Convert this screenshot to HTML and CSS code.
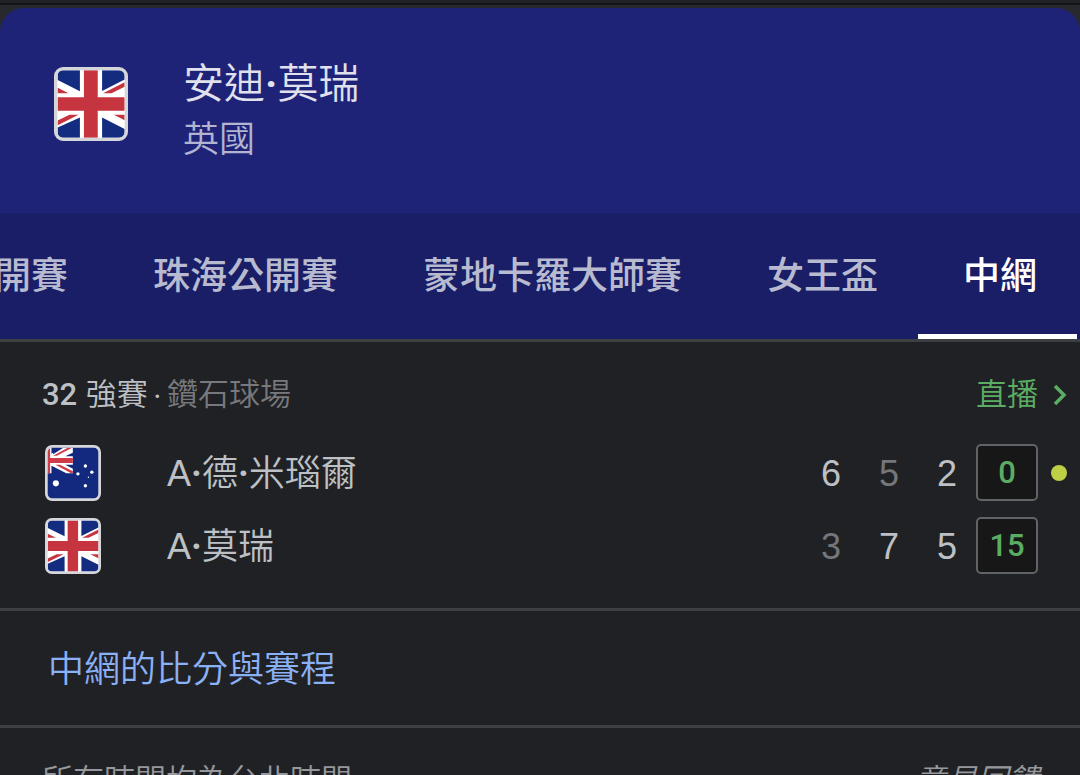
FILE: index.html
```html
<!DOCTYPE html>
<html lang="zh-Hant">
<head>
<meta charset="utf-8">
<meta name="viewport" content="width=device-width, initial-scale=1">
<title>安迪·莫瑞</title>
<link rel="stylesheet" href="styles.css">
</head>
<body>
<svg class="sprite" aria-hidden="true">
  <symbol id="flag-gb" viewBox="44 53 220 220">
    <rect x="49" y="58" width="210" height="210" rx="22" fill="#fff"/>
    <path fill="#142c80" d="M121 63H70Q55 63 55 78V92L121 125ZM187 63H238Q254 63 254 78V90L187 124ZM55 233L121 203V263H70Q55 263 55 248ZM187 203L254 237V248Q254 263 238 263H187Z"/>
    <path fill="#c5343f" d="M133 63H174V143H254V183H174V263H133V183H55V143H133ZM55 115L87 131H55ZM254 98V112L215 131H190ZM55 212L90 195H117L55 226ZM222 195H254V211Z"/>
    <rect x="49" y="58" width="210" height="210" rx="22" fill="none" stroke="#d5d6da" stroke-width="10"/>
  </symbol>
  <symbol id="flag-au" viewBox="47 29 165 165">
    <rect x="51" y="33" width="157" height="157" rx="17" fill="#12297f"/>
    <path fill="#fff" d="M54 37H66V55L93 37H129V52L107 62H129V87H107L129 99V112H110L66 90V112H54Z"/>
    <path fill="#12297f" d="M71 37H101L71 56ZM129 53V61H112ZM71 93L98 112H71ZM112 88H129V97Z"/>
    <path fill="#d03b49" d="M54 37H62V67H129V82H62V112H54ZM114 37H127L82 61H71ZM78 87H91L129 106V112H124Z"/>
    <g fill="#fff"><circle cx="79" cy="142" r="9"/><circle cx="144" cy="114" r="5"/><circle cx="166" cy="91" r="5"/><circle cx="185" cy="109" r="5"/><circle cx="166" cy="149" r="5"/><circle cx="175" cy="124" r="2"/></g>
    <rect x="51" y="33" width="157" height="157" rx="17" fill="none" stroke="#d5d6da" stroke-width="8"/>
  </symbol>
</svg>

<main class="card">
  <header class="player">
    <svg class="player-flag" role="img" aria-label="英國"><use href="#flag-gb"/></svg>
    <div>
      <h1 class="player-name">安迪<span class="dot">·</span>莫瑞</h1>
      <p class="player-country">英國</p>
    </div>
  </header>

  <nav class="tabs" aria-label="賽事">
    <a class="tab" href="#open">開賽</a>
    <a class="tab" href="#zhuhai">珠海公開賽</a>
    <a class="tab" href="#monte-carlo">蒙地卡羅大師賽</a>
    <a class="tab" href="#queens">女王盃</a>
    <a class="tab tab-active" href="#china-open" aria-current="page">中網</a>
  </nav>

  <section class="match">
    <div class="match-head">
      <p class="match-title"><span class="round-number">32</span> 強賽<span class="separator"> · </span><span class="court">鑽石球場</span></p>
      <a class="live" href="#live">直播
        <svg class="chevron" viewBox="0 0 14 22" aria-hidden="true"><path d="M2 2L11 11L2 20" fill="none" stroke="currentColor" stroke-width="3.5"/></svg>
      </a>
    </div>
    <table class="scores">
      <tr>
        <td class="col-flag"><svg class="flag" role="img" aria-label="澳洲"><use href="#flag-au"/></svg></td>
        <th class="col-name" scope="row">A<span class="dot">·</span>德<span class="dot">·</span>米瑙爾</th>
        <td class="col-set">6</td>
        <td class="col-set lost">5</td>
        <td class="col-set">2</td>
        <td class="col-game"><div class="game">0</div></td>
        <td class="col-serve"><div class="serve"></div></td>
      </tr>
      <tr>
        <td class="col-flag"><svg class="flag" role="img" aria-label="英國"><use href="#flag-gb"/></svg></td>
        <th class="col-name" scope="row">A<span class="dot">·</span>莫瑞</th>
        <td class="col-set lost">3</td>
        <td class="col-set">7</td>
        <td class="col-set">5</td>
        <td class="col-game"><div class="game">15</div></td>
        <td class="col-serve"></td>
      </tr>
    </table>
  </section>

  <a class="more" href="#schedule">中網的比分與賽程</a>

  <footer class="footer">
    <span>所有時間均為台北時間</span>
    <a class="feedback" href="#feedback">意見回饋</a>
  </footer>
</main>
</body>
</html>
```

FILE: styles.css
```css
* {
  box-sizing: border-box;
}

html {
  background: #202124;
  scrollbar-width: none;
}

body {
  margin: 0;
  border-top: 3px solid #202124;
  background: #202124;
  color: #bdc1c6;
  font-family: "Liberation Sans", "Noto Sans CJK TC", sans-serif;
  font-weight: 350;
}

h1,
p {
  margin: 0;
  font-weight: inherit;
}

a {
  color: inherit;
  text-decoration: none;
}

.sprite {
  position: absolute;
  width: 0;
  height: 0;
}

.dot {
  font-family: Roboto, sans-serif;
  font-weight: 700;
}

.separator {
  font-family: "Open Sans", sans-serif;
  font-size: 24px;
  font-weight: 600;
  line-height: 1;
}

.card {
  padding-top: 3px;
  border-top: 2px solid #141416;
  background: #27292c;
}

.player {
  display: flex;
  gap: 55px;
  padding: 48px 54px 45px;
  border-radius: 24px 24px 0 0;
  background: #1e2378;
}

.player-flag {
  flex: none;
  width: 74px;
  height: 74px;
  margin-top: 11px;
}

.player-name {
  color: #e0e1ec;
  font-size: 41px;
  line-height: 56px;
}

.player-country {
  color: #b2b4d0;
  font-size: 36px;
  line-height: 56px;
}

.tabs {
  display: flex;
  justify-content: flex-end;
  overflow: hidden;
  padding-right: 3px;
  border-bottom: 3px solid #3c4043;
  background: #191e66;
}

.tab {
  flex: none;
  padding: 35px 40px 29px 45px;
  border-bottom: 5px solid transparent;
  color: #b8bad0;
  font-size: 37px;
  font-weight: 500;
  line-height: 57px;
}

.tab-active {
  border-color: #fff;
  color: #fff;
}

.match,
.footer {
  background: #202124;
}

.match {
  padding: 31px 0 26px;
  border-bottom: 3px solid #3c4043;
}

.match-head {
  display: flex;
  justify-content: space-between;
  padding: 0 13px 19px 42px;
  font-size: 31px;
  line-height: 44px;
}

.round-number {
  font-family: Roboto, sans-serif;
  font-weight: 500;
}

.court {
  color: #77797d;
}

.live {
  display: flex;
  align-items: center;
  gap: 15px;
  color: #5bad63;
}

.chevron {
  width: 14px;
  height: 22px;
}

.scores {
  width: 100%;
  border-collapse: collapse;
  table-layout: fixed;
  font-size: 36px;
}

.scores td,
.scores th {
  height: 73px;
  padding: 0;
  font-weight: inherit;
  line-height: 56px;
}

.scores .col-flag {
  width: 167px;
  padding-left: 45px;
}

.scores .col-name {
  padding-top: 2px;
  text-align: left;
}

.scores .col-set {
  width: 58px;
  padding-top: 2px;
  text-align: center;
}

.scores .lost {
  color: #74767a;
}

.scores .col-game {
  width: 62px;
}

.scores .col-serve {
  width: 42px;
  padding-left: 13px;
}

.flag {
  display: block;
  width: 56px;
  height: 56px;
}

.game {
  border: 2px solid #606368;
  border-radius: 5px;
  background: #171717;
  color: #5bad63;
  font-family: Roboto, sans-serif;
  font-size: 31px;
  font-weight: 500;
  line-height: 53px;
  text-align: center;
}

.serve {
  width: 16px;
  height: 16px;
  border-radius: 50%;
  background: #bccf45;
}

.more {
  display: block;
  padding: 31px 48px 27px;
  border-bottom: 3px solid #3c4043;
  background: #202124;
  color: #8ab0f5;
  font-size: 36px;
  line-height: 56px;
}

.footer {
  display: flex;
  justify-content: space-between;
  padding: 31px 41px 30px 42px;
  color: #96989d;
  font-size: 31px;
  line-height: 44px;
}

.feedback {
  font-style: italic;
}
```
